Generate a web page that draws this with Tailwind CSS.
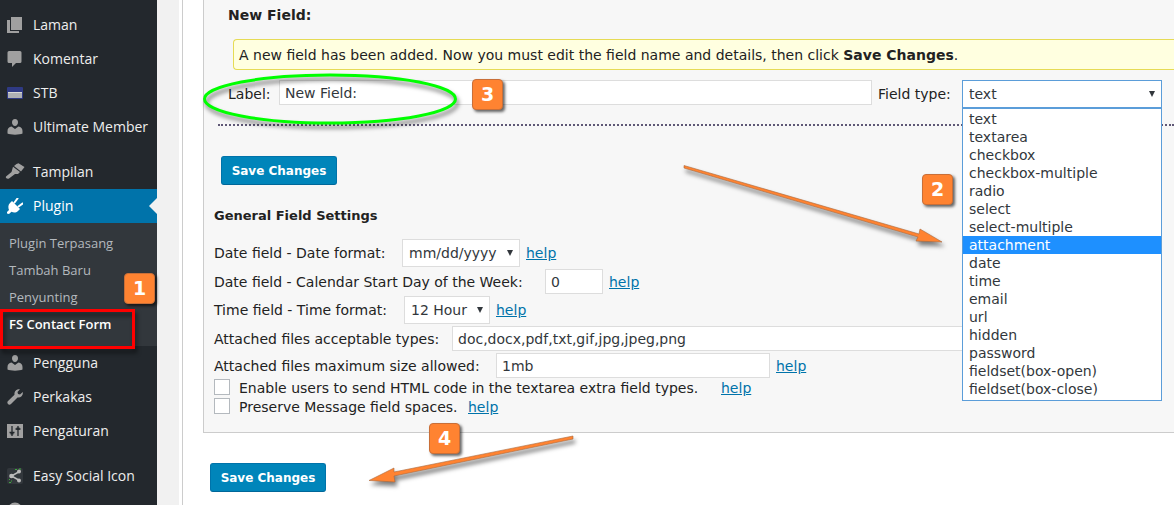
<!DOCTYPE html>
<html lang="id">
  <head>
    <meta charset="UTF-8" />
    <meta name="viewport" content="width=device-width, initial-scale=1.0" />
    <title>FS Contact Form</title>
    <script src="https://cdn.jsdelivr.net/npm/@tailwindcss/browser@4"></script>
  </head>
  <body class="relative flex h-screen overflow-hidden bg-[#f1f1f1] font-['DejaVu_Sans',sans-serif] text-sm text-[#222]">
    <!-- Admin menu -->
    <nav class="w-[157px] shrink-0 bg-[#23282d] pt-2 font-['Open_Sans',sans-serif] text-sm text-[#eee]">
      <a href="#" class="flex h-[34px] items-center gap-2.5 pl-[7px]">
        <svg class="size-4 fill-[#a0a0a0]" viewBox="0 0 16 16"><path d="M4 0h11v13H4z" /><path d="M0 3h3v11h9v2H0z" /></svg>
        Laman
      </a>
      <a href="#" class="flex h-[34px] items-center gap-2.5 pl-[7px]">
        <svg class="size-4 fill-[#a0a0a0]" viewBox="0 0 16 16"><path d="M2 0h11a1.500 1.500 0 0 1 1.500 1.500v9A1.500 1.500 0 0 1 13 12H9l-4 4v-4H2A1.500 1.500 0 0 1 .5 10.500v-9A1.500 1.500 0 0 1 2 0z" /></svg>
        Komentar
      </a>
      <a href="#" class="flex h-[34px] items-center gap-2.5 pl-[7px]">
        <svg class="size-4" viewBox="0 0 16 16"><rect y="2" width="16" height="12" rx="1" fill="#2f3a84" /><rect x="1" y="7" width="14" height="6" fill="#aeb0b4" /><path d="M1 7.500h14" stroke="#d8d8d8" /></svg>
        STB
      </a>
      <a href="#" class="flex h-[34px] items-center gap-2.5 pl-[7px]">
        <svg class="size-4 fill-[#a0a0a0]" viewBox="0 0 16 16"><path d="M8 0c2 0 3 1.400 3 3.300S9.800 7 8 7 5 5.200 5 3.300 6 0 8 0zM4.500 7.500 8 10l3.500-2.500C14 8 15.500 9.500 15.500 12v2.500C13 16 3 16 .5 14.500V12C.5 9.500 2 8 4.500 7.500z" /></svg>
        Ultimate Member
      </a>
      <a href="#" class="mt-[11px] flex h-[34px] items-center gap-2.5 pl-[7px]">
        <svg class="size-4 overflow-visible fill-[#a0a0a0]" viewBox="0 0 16 16"><path d="m9.500 0 2-.8 6 3.800-3.500 4.500L7 2z" /><path d="m6 2.800 7 5.200-2 2H8L2 14.500c-1.500 1-4-.5-3-2L4.500 8z" /></svg>
        Tampilan
      </a>
      <a href="#" class="relative flex h-[34px] items-center gap-2.5 bg-[#0073aa] pl-[7px] text-white">
        <svg class="size-4" viewBox="0 0 16 16" fill="#fff"><path d="m3 5 2-2 8 8-2 2c-2 2-4.500 2-6.500.8L2 16 0 15.500V14l2-2C1 9.500 1 7 3 5z" /><path d="m7.500 4.500 3-4M11.500 8.500l4-3" stroke="#fff" stroke-width="2" stroke-linecap="round" /></svg>
        Plugin
        <span class="absolute top-[9px] right-0 border-y-8 border-r-8 border-y-transparent border-r-[#f1f1f1]"></span>
      </a>
      <div class="flex flex-col bg-[#32373c] pt-[7px] pb-2 text-[13px] leading-[27px] text-[#b4b9be]">
        <a href="#" class="pl-[9px]">Plugin Terpasang</a>
        <a href="#" class="pl-[9px]">Tambah Baru</a>
        <a href="#" class="pl-[9px]">Penyunting</a>
        <a href="#" class="pl-[9px] font-semibold text-white">FS Contact Form</a>
      </div>
      <a href="#" class="flex h-[34px] items-center gap-2.5 pl-[7px]">
        <svg class="size-4 fill-[#a0a0a0]" viewBox="0 0 16 16"><path d="M8 0c2 0 3 1.400 3 3.300S9.800 7 8 7 5 5.200 5 3.300 6 0 8 0zM4.500 7.500 8 10l3.500-2.500C14 8 15.500 9.500 15.500 12v2.500C13 16 3 16 .5 14.500V12C.5 9.500 2 8 4.500 7.500z" /></svg>
        Pengguna
      </a>
      <a href="#" class="flex h-[34px] items-center gap-2.5 pl-[7px]">
        <svg class="size-4 fill-[#a0a0a0]" viewBox="0 0 16 16"><path d="M13 .3 10.500 3l.5 2 2 .5L15.800 3c.6 3.500-2 6-5.300 5.500L4 15c-2 2-5-.8-3-3l6.500-6.300C7 2.500 9.500-.5 13 .3z" /></svg>
        Perkakas
      </a>
      <a href="#" class="flex h-[34px] items-center gap-2.5 pl-[7px]">
        <svg class="size-4" viewBox="0 0 16 16"><path d="M0 1h16v14H0z" fill="#a0a0a0" /><path d="M5 3v10M11 3v10M2.500 9.500h5M8.500 6h5" stroke="#23282d" stroke-width="1.300" /><path d="M3.500 9h3v2.500h-3zM9.500 4.500h3V7h-3z" fill="#23282d" /></svg>
        Pengaturan
      </a>
      <a href="#" class="mt-[11px] flex h-[34px] items-center gap-2.5 pl-[7px]">
        <svg class="size-4" viewBox="0 0 16 16"><rect width="16" height="16" rx="2" fill="#32373c" /><path d="M12.500 3.500 4.500 8l8 4.500" fill="none" stroke="#bbb" stroke-width="1.500" /><circle cx="12" cy="3.500" r="2" fill="#bbb" /><circle cx="4.500" cy="8" r="2.300" fill="#bbb" /><circle cx="12" cy="12.500" r="2" fill="#bbb" /><path d="M8 1.500h2M12 1h2M2 11.500h1M4 13h1M2 14.500h2" stroke="#3faa3f" /></svg>
        Easy Social Icon
      </a>
      <a href="#" class="flex h-[34px] items-center gap-2.5 pl-[7px]" aria-label="Menu">
        <svg class="size-4 fill-[#a0a0a0]" viewBox="0 0 16 16"><circle cx="8" cy="8" r="7.500" /></svg>
      </a>
    </nav>

    <main class="ml-[22px] min-w-0 flex-1 bg-white pl-[3px]">
      <div class="h-full border-l border-[#ccc] pl-5">
        <section class="border-b border-l border-[#ccc] bg-[#f7f7f7]">
          <div class="pt-[5px] pl-6">
            <h2 class="font-bold leading-5">New Field:</h2>
          </div>
          <p class="mt-3.5 ml-[29px] flex h-[31px] items-center rounded-l-sm border border-r-0 border-[#e6db55] bg-[#ffffe0] pl-[5px] whitespace-pre">A new field has been added. Now you must edit the field name and details, then click <strong>Save Changes</strong>.</p>
          <div class="mt-2.5 flex h-7 items-center pr-3 pl-6">
            <label for="field-label" class="w-[45px]">Label:</label>
            <input id="field-label" type="text" value="New Field:" class="mr-1.5 mb-[3px] ml-1.5 h-[25px] min-w-0 flex-1 border border-[#ddd] bg-white px-[5px] text-[#32373c]" />
            <label for="field-type" class="w-[78px]">Field type:</label>
            <div class="relative ml-1.5 h-7 w-[200px] text-[#32373c]">
              <select id="field-type" class="h-7 w-full appearance-none border border-[#5b9dd9] bg-white px-1.5">
                <option>text</option>
              </select>
              <svg class="pointer-events-none absolute top-[11px] right-[7px] h-1.5 w-[6px] fill-[#32373c]" viewBox="0 0 6 6"><path d="M0 0h6L3 6z" /></svg>
              <ul role="listbox" aria-label="Field type" class="absolute top-7 left-0 z-10 w-full border border-[#5b9dd9] bg-white pt-px pb-0.5 leading-[18px] *:px-1.5">
                <li role="option">text</li>
                <li role="option">textarea</li>
                <li role="option">checkbox</li>
                <li role="option">checkbox-multiple</li>
                <li role="option">radio</li>
                <li role="option">select</li>
                <li role="option">select-multiple</li>
                <li role="option" aria-selected="true" class="bg-[#1e90ff] text-white">attachment</li>
                <li role="option">date</li>
                <li role="option">time</li>
                <li role="option">email</li>
                <li role="option">url</li>
                <li role="option">hidden</li>
                <li role="option">password</li>
                <li role="option">fieldset(box-open)</li>
                <li role="option">fieldset(box-close)</li>
              </ul>
            </div>
          </div>
          <div class="mt-4 ml-3.5 border-t-2 border-dotted border-[#5f5876]"></div>

          <div class="pt-[30px] pl-[17px]">
            <button type="button" class="h-[29px] w-[116px] rounded-[3px] border border-[#0073aa] border-b-[#006799] bg-[#0085ba] text-xs font-bold text-white">Save Changes</button>
          </div>

          <div class="pt-[21px] pb-[15px] pl-2.5">
            <h3 class="text-[13px] font-bold leading-5">General Field Settings</h3>
            <div class="mt-[13px] flex flex-col gap-0.5">
              <div class="flex h-7 items-center gap-1.5">
                <label for="date-format" class="w-[182px]">Date field - Date format:</label>
                <div class="relative w-[118px] text-[#32373c]">
                  <select id="date-format" class="h-7 w-full appearance-none border border-[#ddd] bg-white px-1.5"><option>mm/dd/yyyy</option></select>
                  <svg class="pointer-events-none absolute top-[11px] right-[7px] h-1.5 w-[6px] fill-[#32373c]" viewBox="0 0 6 6"><path d="M0 0h6L3 6z" /></svg>
                </div>
                <a href="#" class="text-[#0073aa] underline">help</a>
              </div>
              <div class="flex h-[25px] items-center gap-1.5">
                <label for="start-day" class="w-[325px]">Date field - Calendar Start Day of the Week:</label>
                <input id="start-day" type="text" value="0" class="h-[25px] w-[58px] border border-[#ddd] bg-white px-[5px] text-[#32373c]" />
                <a href="#" class="text-[#0073aa] underline">help</a>
              </div>
              <div class="flex h-7 items-center gap-1.5">
                <label for="time-format" class="w-[184px]">Time field - Time format:</label>
                <div class="relative w-[86px] text-[#32373c]">
                  <select id="time-format" class="h-7 w-full appearance-none border border-[#ddd] bg-white px-1.5"><option>12 Hour</option></select>
                  <svg class="pointer-events-none absolute top-[11px] right-[7px] h-1.5 w-[6px] fill-[#32373c]" viewBox="0 0 6 6"><path d="M0 0h6L3 6z" /></svg>
                </div>
                <a href="#" class="text-[#0073aa] underline">help</a>
              </div>
              <div class="flex h-[25px] items-center gap-1.5 pr-12">
                <label for="file-types" class="w-[232px]">Attached files acceptable types:</label>
                <input id="file-types" type="text" value="doc,docx,pdf,txt,gif,jpg,jpeg,png" class="h-[25px] min-w-0 flex-1 border border-[#ddd] bg-white px-[5px] text-[#32373c]" />
              </div>
              <div class="flex h-[25px] items-center gap-1.5">
                <label for="max-size" class="w-[276px]">Attached files maximum size allowed:</label>
                <input id="max-size" type="text" value="1mb" class="h-[25px] w-[274px] border border-[#ddd] bg-white px-[5px] text-[#32373c]" />
                <a href="#" class="text-[#0073aa] underline">help</a>
              </div>
            </div>
            <div class="mt-px flex h-[19px] items-start leading-[18px]">
              <input id="send-html" type="checkbox" class="mr-[9px] size-4 appearance-none border border-[#b4b9be] bg-white" />
              <label for="send-html" class="w-[482px]">Enable users to send HTML code in the textarea extra field types.</label>
              <a href="#" class="text-[#0073aa] underline">help</a>
            </div>
            <div class="flex h-[19px] items-start leading-[18px]">
              <input id="preserve" type="checkbox" class="mr-[9px] size-4 appearance-none border border-[#b4b9be] bg-white" />
              <label for="preserve" class="w-[229px]">Preserve Message field spaces.</label>
              <a href="#" class="text-[#0073aa] underline">help</a>
            </div>
          </div>
        </section>
        <button type="button" class="mt-[30px] ml-[7px] h-[29px] w-[116px] rounded-[3px] border border-[#0073aa] border-b-[#006799] bg-[#0085ba] text-xs font-bold text-white">Save Changes</button>
      </div>
    </main>

    <!-- Step annotations -->
    <svg class="pointer-events-none absolute top-0 left-0 z-20 h-[505px] w-[1174px] drop-shadow-[2px_4px_2px_rgba(0,0,0,0.5)]" viewBox="0 0 1174 505" fill="none">
      <rect x="1.500" y="310.500" width="132" height="37" stroke="#f00" stroke-width="3" />
      <ellipse cx="330" cy="99" rx="125.500" ry="24" stroke="#0f0" stroke-width="3" />
      <g fill="#ff8331" stroke="#a8683c" stroke-width=".6">
        <path d="m684 165.500 235 68.500 1-5 22 13-26-1 2-4-234-69z" />
        <path d="m573 436-179 36 0-4-25 12.500 26 1.500-1-6 179-37z" />
      </g>
    </svg>
    <div class="z-20 font-bold text-white *:absolute *:flex *:size-[31px] *:items-center *:justify-center *:rounded *:border *:border-[#c96f38] *:bg-[#ff8331] *:text-[19px] *:shadow-[2px_2px_3px_rgba(0,0,0,0.6)]">
      <span class="top-[273px] left-[124px]">1</span>
      <span class="top-[174px] left-[922px]">2</span>
      <span class="top-[79px] left-[472px]">3</span>
      <span class="top-[423px] left-[429px]">4</span>
    </div>
  </body>
</html>
